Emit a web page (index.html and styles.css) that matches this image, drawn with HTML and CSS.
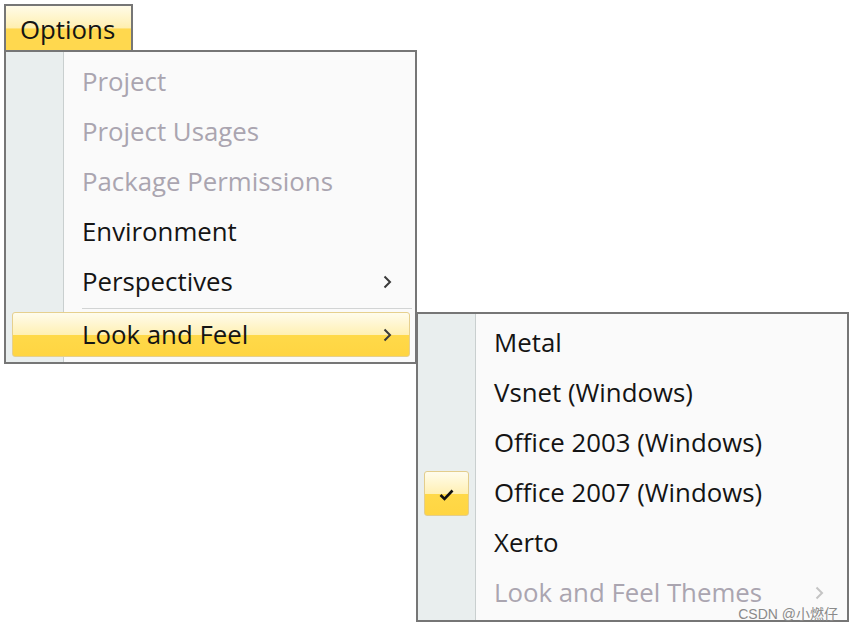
FILE: index.html
```html
<!DOCTYPE html>
<html>
<head>
<meta charset="utf-8">
<link rel="stylesheet" href="styles.css">
</head>
<body>
<div class="root">
  <div class="menubar">
    <div class="tab">Options</div>
  </div>
  <div class="menu main">
    <div class="item disabled"><span class="ico"></span><span class="label">Project</span></div>
    <div class="item disabled"><span class="ico"></span><span class="label">Project Usages</span></div>
    <div class="item disabled"><span class="ico"></span><span class="label">Package Permissions</span></div>
    <div class="item"><span class="ico"></span><span class="label">Environment</span></div>
    <div class="item"><span class="ico"></span><span class="label">Perspectives</span>
      <svg class="arrow" width="9" height="14" viewBox="0 0 9 14"><path d="M1.5 1.5 L7 7 L1.5 12.5" fill="none" stroke="#3a3a3a" stroke-width="2"/></svg>
    </div>
    <div class="sep"></div>
    <div class="item hot"><span class="ico"></span><span class="label">Look and Feel</span>
      <svg class="arrow" width="9" height="14" viewBox="0 0 9 14"><path d="M1.5 1.5 L7 7 L1.5 12.5" fill="none" stroke="#3a3a3a" stroke-width="2"/></svg>
    </div>
  </div>

  <div class="menu sub">
    <div class="item"><span class="ico"></span><span class="label">Metal</span></div>
    <div class="item"><span class="ico"></span><span class="label">Vsnet (Windows)</span></div>
    <div class="item"><span class="ico"></span><span class="label">Office 2003 (Windows)</span></div>
    <div class="item"><span class="ico"><span class="check"><svg width="15" height="12" viewBox="0 0 15 12"><path d="M1.5 6 L5.5 10 L13.5 1.5" fill="none" stroke="#111" stroke-width="2.6"/></svg></span></span><span class="label">Office 2007 (Windows)</span></div>
    <div class="item"><span class="ico"></span><span class="label">Xerto</span></div>
    <div class="item disabled"><span class="ico"></span><span class="label">Look and Feel Themes</span>
      <svg class="arrow" width="9" height="14" viewBox="0 0 9 14"><path d="M1.5 1.5 L7 7 L1.5 12.5" fill="none" stroke="#c4c4c4" stroke-width="2"/></svg>
    </div>
    <div class="watermark">CSDN @小燃仔</div>
  </div>
</div>
</body>
</html>
```
FILE: styles.css
```css
html, body {
  margin: 0;
  padding: 0;
  background: #ffffff;
}

.root {
  position: relative;
  width: 853px;
  height: 629px;
  padding: 4px 0 0 4px;
  box-sizing: border-box;
  font-family: "Open Sans", "Noto Sans", "Noto Sans CJK SC", sans-serif;
  font-size: 25.8px;
  color: #141414;
}

.menubar {
  display: flex;
}

.tab {
  box-sizing: border-box;
  width: 129px;
  height: 46px;
  border: 2px solid #767676;
  border-bottom: none;
  padding-left: 14px;
  line-height: 46px;
  background: linear-gradient(to bottom, #fffbe8 0%, #ffefb0 50%, #ffd84e 52%, #ffd84e 100%);
}

.menu {
  box-sizing: border-box;
  border: 2px solid #767676;
  background: linear-gradient(to right, #e9eeee 0, #e9eeee 57px, #c9cfcf 57px, #c9cfcf 58px, #fafafa 58px);
}

.main {
  width: 413px;
  padding: 5px 0 5px 0;
}

.sub {
  position: absolute;
  left: 416px;
  top: 312px;
  width: 433px;
  height: 310px;
  padding: 4px 0 2px 0;
}

.item {
  display: flex;
  align-items: center;
  height: 50px;
  padding-right: 23px;
}

.ico {
  width: 57px;
  height: 100%;
  display: flex;
  align-items: center;
  justify-content: center;
  flex: none;
}

.label {
  padding-left: 19px;
  flex: 1;
  white-space: nowrap;
  line-height: 1;
}

.arrow {
  flex: none;
}

.disabled {
  color: #aaa5b0;
}

.sep {
  height: 1px;
  margin: 1px 3px 0 76px;
  background: #d2d4d4;
}

.hot {
  box-sizing: border-box;
  height: 45px;
  margin: 3px 5px 0 6px;
  border: 1px solid #e6d08e;
  border-radius: 3px;
  padding-right: 17px;
  background: linear-gradient(to bottom, #fffcec 0%, #fff0b4 50%, #ffd949 51%, #ffd542 100%);
}

.hot .ico {
  width: 50px;
}

.check {
  box-sizing: border-box;
  width: 45px;
  height: 45px;
  border: 1px solid #e3cd8c;
  border-radius: 3px;
  display: flex;
  align-items: center;
  justify-content: center;
  padding-top: 3px;
  background: linear-gradient(to bottom, #fffcec 0%, #fff0b4 50%, #ffd949 51%, #ffd542 100%);
}

.watermark {
  position: absolute;
  right: 9px;
  bottom: -1px;
  line-height: 14px;
  font-family: "Liberation Sans", "Noto Sans CJK SC", sans-serif;
  font-size: 14px;
  color: #8a8a8a;
}
```
